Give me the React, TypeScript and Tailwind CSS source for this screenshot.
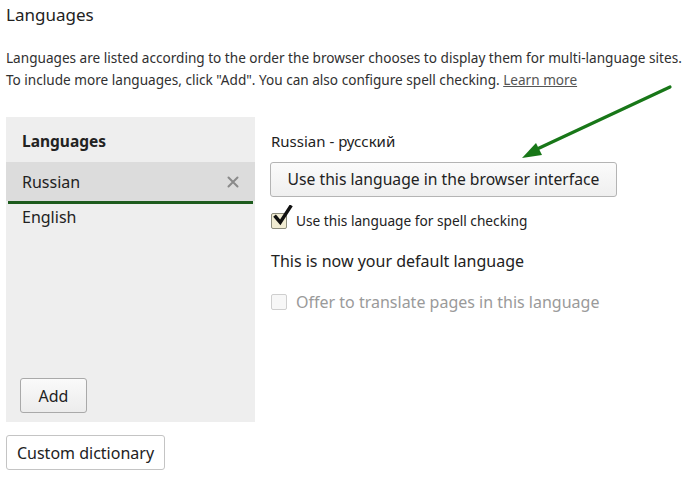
import React from 'react';

const font = { fontFamily: '"Noto Sans", "Open Sans", sans-serif' };

function CloseGlyph() {
  return (
    <svg viewBox="0 0 12 12" aria-hidden="true" className="h-3 w-3 stroke-[#8a8a8a]">
      <path d="M1.5 1.5l9 9M10.5 1.5l-9 9" fill="none" strokeWidth="2" strokeLinecap="round" />
    </svg>
  );
}

function CheckedBox() {
  return (
    <span className="relative inline-block h-[16px] w-[16px] shrink-0 rounded-[2px] border border-[#8c8c7c] bg-[#f1ecd2]">
      <svg viewBox="0 0 24 24" aria-hidden="true" className="absolute -top-[9px] left-[0px] h-[22px] w-[22px]">
        <path d="M4 13l5 6L20 2" fill="none" stroke="#111" strokeWidth="3.8" strokeLinecap="square" />
      </svg>
    </span>
  );
}

function PointerArrow() {
  return (
    <svg className="pointer-events-none absolute left-0 top-0" width="700" height="490" aria-hidden="true">
      <line x1="670" y1="87" x2="535" y2="150" stroke="#187718" strokeWidth="3.2" strokeLinecap="round" />
      <polygon points="522,158 536,143 542,155" fill="#187718" />
    </svg>
  );
}

export default function App() {
  return (
    <div style={font} className="relative h-[490px] w-[700px] overflow-hidden bg-white text-[#222]">
      <h1 className="pl-[6px] pt-[3px] text-[17px] leading-[24px] font-normal">Languages</h1>
      <p className="mt-[20px] whitespace-nowrap pl-[6px] text-[13.6px] leading-[22px] text-[#303030]">
        Languages are listed according to the order the browser chooses to display them for multi-language sites.
        <br />
        To include more languages, click "Add". You can also configure spell checking.{' '}
        <a className="text-[#555] underline">Learn more</a>
      </p>

      <div className="mt-[26px] flex">
        <div className="ml-[6px] flex w-[159px] flex-col">
          <div className="flex h-[305px] w-[249px] flex-col bg-[#eeeeee] pt-[12px]">
            <div className="pl-[16px] text-[15.5px] leading-[24px] font-bold">Languages</div>
            <div className="mt-[9px] flex h-[39px] items-center justify-between bg-[#dcdcdc] pl-[16px] pr-[16px] text-[16px]">
              <span>Russian</span>
              <CloseGlyph />
            </div>
            <div className="mx-[2px] h-[3px] bg-[#1d5b1d]" />
            <div className="pl-[16px] pt-[1px] text-[16px] leading-[24px]">English</div>
            <div className="mt-auto mb-[9px] ml-[14px]">
              <button className="h-[35px] w-[67px] rounded-[3px] border border-[#a9a9a9] bg-gradient-to-b from-[#fafafa] to-[#ececec] text-[16px]">
                Add
              </button>
            </div>
          </div>
          <button className="mt-[13px] h-[35px] w-[159px] rounded-[3px] border border-[#c4c4c4] bg-white text-[16px]">
            Custom dictionary
          </button>
        </div>

        <div className="ml-[106px] flex flex-col pt-[12px]">
          <div className="text-[15px] leading-[24px]">Russian - русский</div>
          <button className="mt-[9px] -ml-[1px] h-[35px] w-[347px] rounded-[3px] border border-[#b4b4b4] bg-gradient-to-b from-[#fbfbfb] to-[#efefef] text-[15.7px]">
            Use this language in the browser interface
          </button>
          <label className="mt-[14px] flex items-center gap-[9px] text-[13.7px] leading-[20px]">
            <CheckedBox />
            <span>Use this language for spell checking</span>
          </label>
          <div className="mt-[18px] text-[16px] leading-[24px]">This is now your default language</div>
          <label className="mt-[17px] flex items-center gap-[9px] text-[16px] leading-[24px] text-[#9a9a9a]">
            <span className="inline-block h-[16px] w-[16px] rounded-[2px] border border-[#cfcfcf] bg-[#f7f7f7]" />
            <span>Offer to translate pages in this language</span>
          </label>
        </div>
      </div>

      <PointerArrow />
    </div>
  );
}
